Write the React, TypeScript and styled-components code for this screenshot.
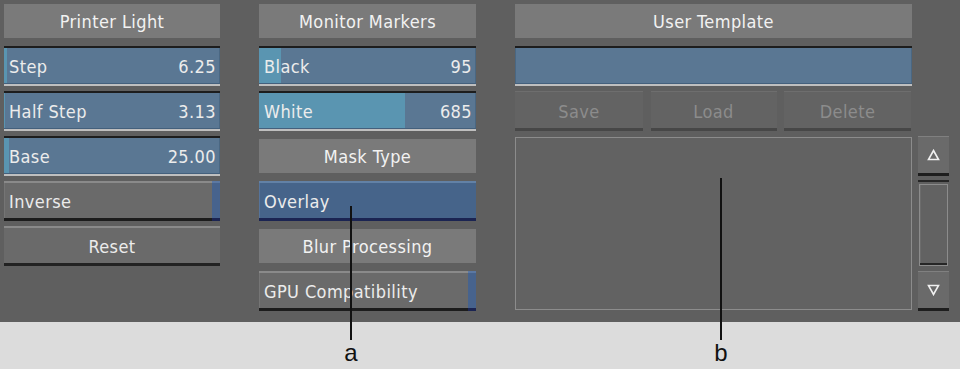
import React from "react";
import styled, { createGlobalStyle } from "styled-components";

const Global = createGlobalStyle`
  html, body { margin: 0; padding: 0; }
  body { width: 960px; height: 369px; overflow: hidden; background: #dcdcdc; }
`;

const Page = styled.div`
  position: relative;
  width: 960px;
  height: 369px;
  background: #dcdcdc;
  font-family: "DejaVu Sans Condensed", "DejaVu Sans", sans-serif;
  font-stretch: condensed;
  font-size: 18px;
  letter-spacing: 0.4px;
  color: #ececec;
`;

const Panel = styled.div`
  display: flex;
  align-items: flex-start;
  height: 322px;
  box-sizing: border-box;
  padding: 1px 0 0 4px;
  background: #5f5f5f;
`;

const Column = styled.div<{ $w: number; $mr: number }>`
  display: grid;
  grid-template-rows: repeat(7, 40px);
  row-gap: 5px;
  width: ${(p) => p.$w}px;
  margin-right: ${(p) => p.$mr}px;
`;

const Header = styled.div`
  margin: 3px 0;
  background: #7a7a7a;
  display: flex;
  align-items: center;
  justify-content: center;
  color: #f2f2f2;
`;

const Field = styled.div`
  position: relative;
  box-sizing: border-box;
  background: #5a7793;
  border-top: 2px solid #1d1d1d;
  border-bottom: 2px solid #bfbfbf;
  box-shadow: inset 0 -1px 0 #44607c, inset 1px 0 0 #4a6782, inset -1px 0 0 #4a6782;
  display: flex;
  align-items: center;
  justify-content: space-between;
  padding: 1px 4px 0 5px;
  overflow: hidden;
`;

const Fill = styled.div`
  position: absolute;
  left: 0;
  top: 0;
  bottom: 1px;
  background: #5a95b1;
`;

const FieldText = styled.span`
  position: relative;
`;

const Toggle = styled.div<{ $selected?: boolean }>`
  position: relative;
  box-sizing: border-box;
  display: flex;
  align-items: center;
  padding: 1px 0 0 5px;
  background: ${(p) => (p.$selected ? "#46648a" : "#6a6a6a")};
  border-top: 2px solid ${(p) => (p.$selected ? "#6281a6" : "#8a8a8a")};
  border-bottom: 3px solid ${(p) => (p.$selected ? "#1b2452" : "#1c1c1c")};
  box-shadow: inset 1px 0 0 ${(p) => (p.$selected ? "#55739a" : "#757575")};
`;

const Indicator = styled.div`
  position: absolute;
  right: 0;
  top: -2px;
  bottom: -3px;
  width: 8px;
  background: #47638d;
  border-top: 2px solid #5b78a3;
  border-bottom: 3px solid #1b2452;
  box-sizing: border-box;
`;

const PushButton = styled.div`
  box-sizing: border-box;
  display: flex;
  align-items: center;
  justify-content: center;
  padding-top: 1px;
  background: #6a6a6a;
  border-top: 2px solid #8a8a8a;
  border-bottom: 3px solid #222;
`;

const ButtonRow = styled.div`
  display: grid;
  grid-template-columns: 128px 126px 127px;
  column-gap: 7.5px;
`;

const DimButton = styled.div`
  box-sizing: border-box;
  display: flex;
  align-items: center;
  justify-content: center;
  padding-top: 2px;
  background: #636363;
  border-top: 1px solid #6e6e6e;
  border-bottom: 3px solid #474747;
  color: #8c8c8c;
`;

const ListBox = styled.div`
  grid-row: 4 / span 4;
  margin: 1px 0 1px 0;
  border: 1px solid #8c8c8c;
  background: #626262;
  width: 397px;
  box-sizing: border-box;
`;

const Scroll = styled.div`
  display: grid;
  grid-template-rows: repeat(7, 40px);
  row-gap: 5px;
  width: 31px;
`;

const ArrowBtn = styled.div<{ $row: number }>`
  grid-row: ${(p) => p.$row};
  box-sizing: border-box;
  display: flex;
  align-items: center;
  justify-content: center;
  background: #6a6a6a;
  border-top: 1px solid #808080;
  border-bottom: 3px solid #1e1e1e;
`;

const Track = styled.div`
  grid-row: 5 / span 2;
  box-sizing: border-box;
  border-top: 2px solid #262626;
  margin-top: -1px;
  padding: 2px 1px 0 1px;
  display: flex;
`;

const Thumb = styled.div`
  flex: 1;
  box-sizing: border-box;
  border: 1px solid #8c8c8c;
  background: #626262;
  box-shadow: inset 0 -2px 0 #262626, inset 1px 0 0 #6c6c6c;
`;

const Leader = styled.div<{ $x: number; $top: number }>`
  position: absolute;
  left: ${(p) => p.$x}px;
  top: ${(p) => p.$top}px;
  width: 2px;
  height: ${(p) => 340 - p.$top}px;
  background: #111;
`;

const Callout = styled.div<{ $x: number }>`
  position: absolute;
  left: ${(p) => p.$x - 10}px;
  width: 20px;
  top: 339px;
  text-align: center;
  font-family: "Liberation Sans", Arial, sans-serif;
  font-size: 24px;
  color: #111;
  letter-spacing: 0;
`;

const Tri = ({ up }: { up: boolean }) => (
  <svg width="13" height="12" viewBox="0 0 13 12">
    <polygon
      points={up ? "6.5,1.5 11.5,10.5 1.5,10.5" : "1.5,1.5 11.5,1.5 6.5,10.5"}
      fill="none"
      stroke="#f0f0f0"
      strokeWidth="1.6"
    />
  </svg>
);

const ValueField = ({ label, value, fill }: { label: string; value: string; fill: number }) => (
  <Field>
    <Fill style={{ width: `${fill}px` }} />
    <FieldText>{label}</FieldText>
    <FieldText>{value}</FieldText>
  </Field>
);

export default function App() {
  return (
    <Page>
      <Global />
      <Panel>
        <Column $w={216} $mr={39}>
          <Header>Printer Light</Header>
          <ValueField label="Step" value="6.25" fill={3} />
          <ValueField label="Half Step" value="3.13" fill={1} />
          <ValueField label="Base" value="25.00" fill={5} />
          <Toggle>
            Inverse
            <Indicator />
          </Toggle>
          <PushButton>Reset</PushButton>
        </Column>
        <Column $w={217} $mr={39}>
          <Header>Monitor Markers</Header>
          <ValueField label="Black" value="95" fill={22} />
          <ValueField label="White" value="685" fill={146} />
          <Header>Mask Type</Header>
          <Toggle $selected>Overlay</Toggle>
          <Header>Blur Processing</Header>
          <Toggle>
            GPU Compatibility
            <Indicator />
          </Toggle>
        </Column>
        <Column $w={396} $mr={7}>
          <Header>User Template</Header>
          <Field />
          <ButtonRow>
            <DimButton>Save</DimButton>
            <DimButton>Load</DimButton>
            <DimButton>Delete</DimButton>
          </ButtonRow>
          <ListBox />
        </Column>
        <Scroll>
          <ArrowBtn $row={4}>
            <Tri up />
          </ArrowBtn>
          <Track>
            <Thumb />
          </Track>
          <ArrowBtn $row={7}>
            <Tri up={false} />
          </ArrowBtn>
        </Scroll>
      </Panel>
      <Leader $x={350} $top={206} />
      <Leader $x={720} $top={178} />
      <Callout $x={351}>a</Callout>
      <Callout $x={721}>b</Callout>
    </Page>
  );
}
